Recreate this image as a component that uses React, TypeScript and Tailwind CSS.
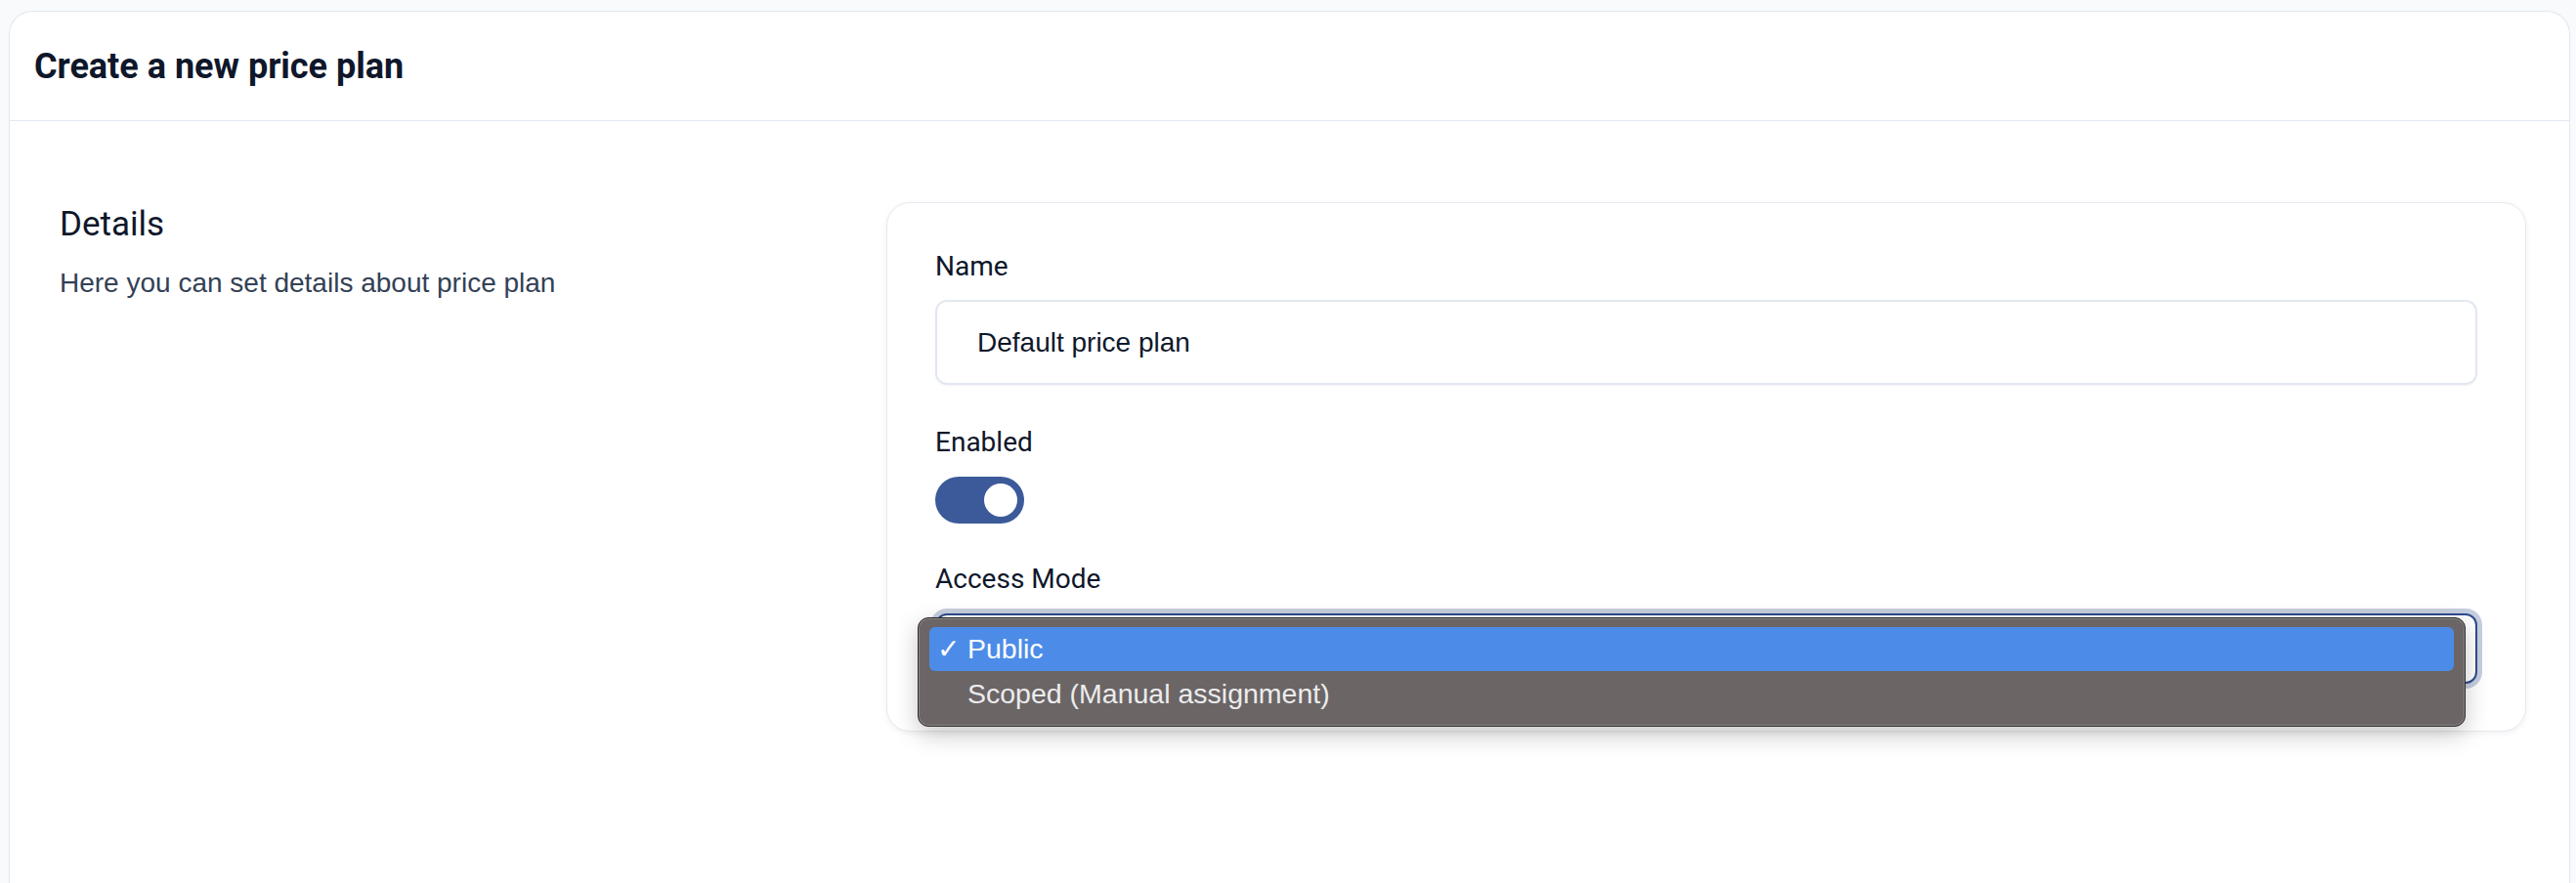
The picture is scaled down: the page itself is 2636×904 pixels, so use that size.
import React from 'react';

const options = ['Public', 'Scoped (Manual assignment)'];

export default function App() {
  return (
    <div className="h-screen bg-[#f8fafc] pt-[11px] pl-[9px] pr-[6px] font-['Liberation_Sans',Arial,sans-serif] overflow-hidden">
      <div className="bg-white border border-b-0 border-[#e2e8f0] rounded-t-[24px] h-full">
        {/* Header */}
        <div className="h-[112px] flex items-center px-[25px] border-b border-[#e2e8f0]">
          <h1 className="font-['Roboto',sans-serif] font-bold text-[36px] leading-none text-[#0f172a]">
            Create a new price plan
          </h1>
        </div>

        {/* Body */}
        <div className="flex pl-[51px] pr-[44px] pt-[83px]">
          <div className="w-[846px] shrink-0 pt-[3px]">
            <h2 className="font-['Roboto',sans-serif] font-normal text-[35px] leading-[40px] text-[#0f172a]">
              Details
            </h2>
            <p className="mt-[20px] text-[28px] leading-[40px] text-[#334155]">
              Here you can set details about price plan
            </p>
          </div>

          <div className="flex-1 bg-white border border-[#e5e9f0] rounded-[24px] shadow-[0_2px_6px_rgba(15,23,42,0.06)] px-[49px] pt-[47px] pb-[48px]">
            {/* Name */}
            <label className="block font-['Roboto',sans-serif] font-normal text-[28px] leading-[36px] text-[#0f172a]">
              Name
            </label>
            <div className="mt-[16px] h-[87px] flex items-center px-[41px] rounded-[12px] border-2 border-[#e2e8f0] shadow-[0_1px_2px_rgba(15,23,42,0.05)]">
              <span className="text-[28px] text-[#0f172a]">Default price plan</span>
            </div>

            {/* Enabled */}
            <label className="mt-[41px] block font-['Roboto',sans-serif] font-normal text-[28px] leading-[36px] text-[#0f172a]">
              Enabled
            </label>
            <div className="mt-[17px] w-[91px] h-[48px] rounded-full bg-[#3c5a99] flex items-center justify-end pr-[7px]">
              <div className="w-[34px] h-[34px] rounded-full bg-white" />
            </div>

            {/* Access Mode */}
            <label className="mt-[39px] block font-['Roboto',sans-serif] font-normal text-[28px] leading-[36px] text-[#0f172a]">
              Access Mode
            </label>
            <div className="relative mt-[17px]">
              <div className="h-[72px] rounded-[12px] border-2 border-[#2e4c8f] bg-white shadow-[0_0_0_5px_#c6cedf]" />

              {/* Native select popup */}
              <div className="absolute left-[-18px] top-[4px] w-[1584px] h-[112px] rounded-[11px] bg-[#6b6566] border border-[#2a2a2a] shadow-[0_8px_24px_rgba(0,0,0,0.22),inset_0_0_0_1px_#8b8586] px-[11px] pt-[9px]">
                <div className="h-[45px] rounded-[6px] bg-[#4c8ce8] flex items-center pl-[8px] text-white text-[28.5px]">
                  <span className="w-[31px] font-['DejaVu_Sans',sans-serif] text-[28px] leading-none">✓</span>
                  <span>{options[0]}</span>
                </div>
                <div className="h-[46px] flex items-center pl-[39px] text-[#ececec] text-[28.5px]">
                  {options[1]}
                </div>
              </div>
            </div>
          </div>
        </div>
      </div>
    </div>
  );
}
